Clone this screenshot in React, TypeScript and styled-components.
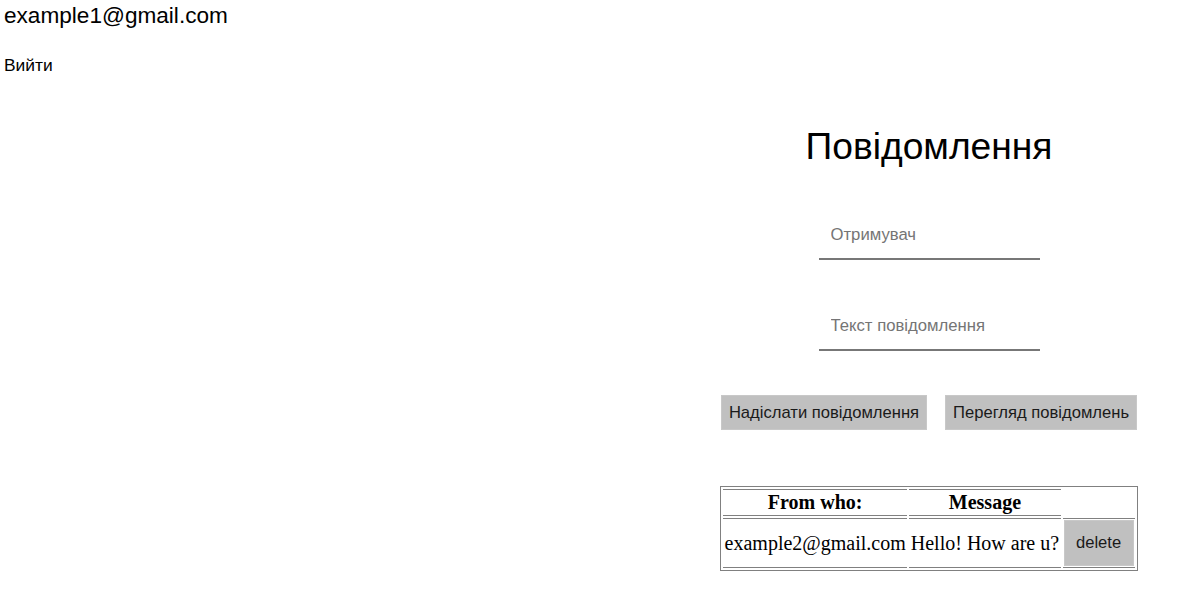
import React from 'react'
import styled, { createGlobalStyle } from 'styled-components'

const GlobalStyle = createGlobalStyle`
  body {
    margin: 0;
    background: #fff;
    font-family: "Liberation Sans", Arial, sans-serif;
    color: #000;
  }
`

const App = () => {
  return (
    <>
      <GlobalStyle />
      <Page>
        <UserBar>
          <Email>example1@gmail.com</Email>
          <Logout>Вийти</Logout>
        </UserBar>
        <Main>
          <Panel>
            <Title>Повідомлення</Title>
            <Field placeholder="Отримувач" />
            <Field placeholder="Текст повідомлення" />
            <Buttons>
              <Button>Надіслати повідомлення</Button>
              <Button>Перегляд повідомлень</Button>
            </Buttons>
            <Table>
              <thead>
                <tr>
                  <Th>From who:</Th>
                  <Th>Message</Th>
                </tr>
              </thead>
              <tbody>
                <tr>
                  <Td>example2@gmail.com</Td>
                  <Td>Hello! How are u?</Td>
                  <Td>
                    <DeleteButton>delete</DeleteButton>
                  </Td>
                </tr>
              </tbody>
            </Table>
          </Panel>
        </Main>
      </Page>
    </>
  )
}

export default App

const Page = styled.div`
  display: flex;
  flex-direction: column;
  min-height: 594px;
`
const UserBar = styled.div`
  display: flex;
  flex-direction: column;
  align-items: flex-start;
  padding: 3px 4px 0;
`
const Email = styled.div`
  font-size: 22.6px;
`
const Logout = styled.div`
  font-size: 17.4px;
  margin-top: 26px;
  cursor: pointer;
`
const Main = styled.div`
  display: flex;
  justify-content: flex-end;
  padding-right: 49px;
`
const Panel = styled.div`
  width: 418px;
  display: flex;
  flex-direction: column;
  align-items: center;
  margin-top: 50px;
`
const Title = styled.div`
  font-size: 37.2px;
  line-height: 41px;
  margin-bottom: 43px;
`
const Field = styled.input`
  width: 221px;
  box-sizing: border-box;
  height: 50px;
  padding: 2px 12px 0;
  border: none;
  border-bottom: 2px solid #777;
  outline: none;
  font-family: "Liberation Sans", Arial, sans-serif;
  font-size: 16.7px;
  margin-bottom: 41px;

  ::placeholder {
    color: #777;
  }
`
const Buttons = styled.div`
  display: flex;
  gap: 18px;
  margin-top: 3px;
`
const Button = styled.button`
  background: #c0c0c0;
  border: 1px solid #c8c8c8;
  height: 35px;
  padding: 0 7px;
  font-family: "Liberation Sans", Arial, sans-serif;
  font-size: 16.6px;
  color: #1a1a1a;
  cursor: pointer;
`
const Table = styled.table`
  margin-top: 56px;
  width: 418px;
  border: 1px solid #808080;
  border-spacing: 2px;
  font-family: "Liberation Serif", "Times New Roman", serif;
  font-size: 20px;
`
const Th = styled.th`
  border-top: 1px solid #808080;
  border-bottom: 1px solid #808080;
  padding: 1px;
  font-weight: 700;
  font-size: 20px;
`
const Td = styled.td`
  border-top: 1px solid #808080;
  border-bottom: 1px solid #808080;
  padding: 1px;
  text-align: center;
  white-space: nowrap;
`
const DeleteButton = styled.button`
  display: block;
  width: 70px;
  height: 46px;
  background: #c0c0c0;
  border: 1px solid #c8c8c8;
  font-family: "Liberation Sans", Arial, sans-serif;
  font-size: 16.6px;
  color: #1a1a1a;
  cursor: pointer;
`
